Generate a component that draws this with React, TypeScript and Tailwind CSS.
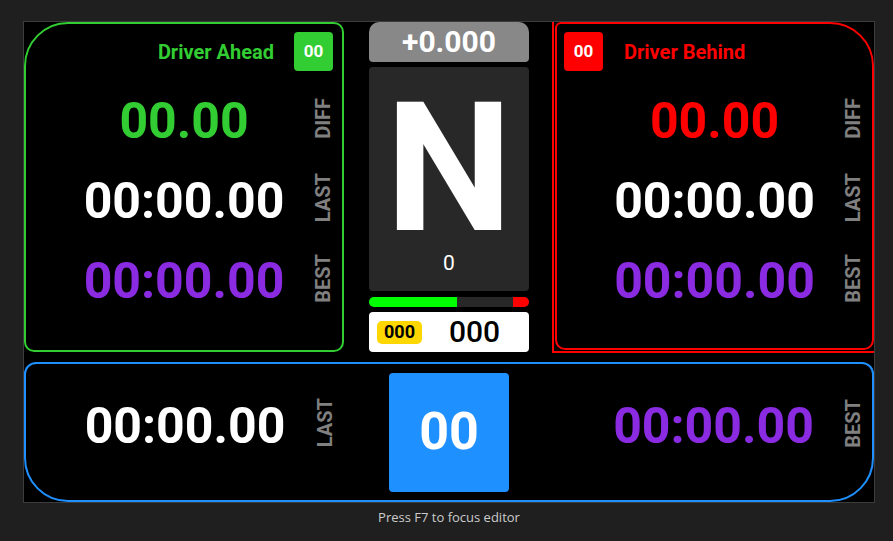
import React from 'react';

const LABEL = "text-[20px] font-bold text-[#808080] leading-none [writing-mode:vertical-rl] rotate-180 justify-self-center mb-[6px]";

function StatRow({ value, label, color }: { value: string; label: string; color: string }) {
  return (
    <div className="h-[80px] grid grid-cols-[38px_1fr_38px] items-center">
      <div />
      <div className={`text-[50px] font-bold leading-none text-center ${color}`}>{value}</div>
      <span className={LABEL}>{label}</span>
    </div>
  );
}

function Badge({ bg, text }: { bg: string; text: string }) {
  return (
    <div className={`w-[39px] h-[39px] rounded-[4px] flex items-center justify-center text-white text-[17px] font-bold ${bg}`}>
      {text}
    </div>
  );
}

export default function App() {
  return (
    <div className="w-[893px] h-[541px] bg-[#1f1f1f] pt-[21px] pl-[23px] font-['Roboto',sans-serif] overflow-hidden">
      <div className="w-[852px] h-[482px] border border-[#3c3c3c] bg-black flex flex-col">
        {/* top row */}
        <div className="flex h-[330px] shrink-0">
          {/* driver ahead */}
          <div className="w-[320px] h-[330px] border-2 border-[#32cd32] rounded-tl-[44px] rounded-tr-[10px] rounded-b-[10px] flex flex-col">
            <div className="flex justify-end items-center gap-[20px] pr-[9px] pt-[8px]">
              <span className="text-[20px] font-bold text-[#32cd32] leading-none">Driver Ahead</span>
              <Badge bg="bg-[#32cd32]" text="00" />
            </div>
            <div className="mt-[10px]">
              <StatRow value="00.00" label="DIFF" color="text-[#32cd32]" />
              <StatRow value="00:00.00" label="LAST" color="text-white" />
              <StatRow value="00:00.00" label="BEST" color="text-[#8a2be2]" />
            </div>
          </div>

          {/* center */}
          <div className="ml-[25px] w-[160px] flex flex-col">
            <div className="h-[40px] bg-[#888888] rounded-t-[10px] rounded-b-[4px] flex items-center justify-center text-white text-[30px] font-bold leading-none">
              +0.000
            </div>
            <div className="mt-[5px] h-[224px] bg-[#282828] rounded-[4px] flex flex-col items-center pt-[27px]">
              <div className="text-white text-[180px] font-bold leading-[150px]">N</div>
              <div className="mt-[7px] text-white text-[21px] leading-[24px]">0</div>
            </div>
            <div className="mt-[6px] h-[10px] rounded-full bg-[#282828] flex overflow-hidden">
              <div className="w-[88px] bg-[#00ff00]" />
              <div className="flex-1" />
              <div className="w-[16px] bg-[#ff0000]" />
            </div>
            <div className="mt-[5px] h-[40px] bg-white rounded-[4px] flex items-center pl-[8px]">
              <div className="w-[45px] h-[23px] bg-[#ffd700] rounded-[5px] flex items-center justify-center text-black text-[18px] font-bold leading-none">
                000
              </div>
              <div className="flex-1 text-center text-black text-[30px] font-medium leading-none pr-[2px]">000</div>
            </div>
          </div>

          {/* driver behind */}
          <div className="ml-[23px] flex-1 h-[331px] border-l-2 border-b-2 border-[#ff0000] pl-[1px]">
            <div className="h-[328px] border-2 border-[#ff0000] rounded-tl-[6px] rounded-tr-[44px] rounded-b-[10px] flex flex-col">
              <div className="flex items-center gap-[21px] pl-[7px] pt-[8px]">
                <Badge bg="bg-[#ff0000]" text="00" />
                <span className="text-[20px] font-bold text-[#ff0000] leading-none">Driver Behind</span>
              </div>
              <div className="mt-[10px]">
                <StatRow value="00.00" label="DIFF" color="text-[#ff0000]" />
                <StatRow value="00:00.00" label="LAST" color="text-white" />
                <StatRow value="00:00.00" label="BEST" color="text-[#8a2be2]" />
              </div>
            </div>
          </div>
        </div>

        {/* bottom panel */}
        <div className="mt-[10px] h-[140px] border-2 border-[#1e90ff] rounded-t-[12px] rounded-b-[44px] flex">
          <div className="w-[318px] grid grid-cols-[38px_1fr_38px] items-center pb-[12px]">
            <div />
            <div className="text-[50px] font-bold leading-none text-center text-white">00:00.00</div>
            <span className={LABEL}>LAST</span>
          </div>
          <div className="ml-[25px] w-[160px] flex items-center justify-center">
            <div className="w-[120px] h-[119px] bg-[#1e90ff] rounded-[4px] flex items-center justify-center text-white text-[52px] font-bold leading-none">
              00
            </div>
          </div>
          <div className="ml-[26px] flex-1 grid grid-cols-[38px_1fr_38px] items-center pb-[12px]">
            <div />
            <div className="text-[50px] font-bold leading-none text-center text-[#8a2be2]">00:00.00</div>
            <span className={LABEL}>BEST</span>
          </div>
        </div>
      </div>
      <div className="w-[852px] mt-[5px] text-center text-[13px] leading-[18px] text-[#cccccc] font-['Open_Sans',sans-serif]">
        Press F7 to focus editor
      </div>
    </div>
  );
}
